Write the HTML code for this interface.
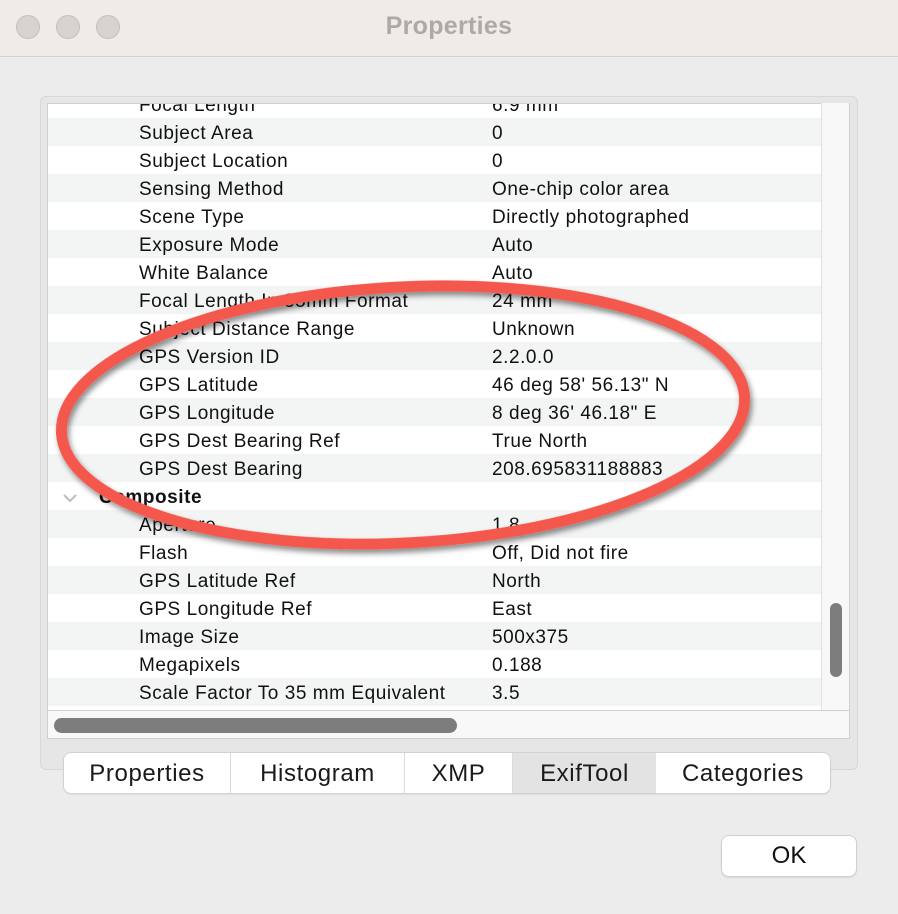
<!DOCTYPE html>
<html><head><style>
*{margin:0;padding:0;box-sizing:border-box}
body{width:898px;height:914px;background:#ececec;font-family:"Liberation Sans",sans-serif;position:relative;overflow:hidden}
.title{position:absolute;left:0;top:0;width:898px;height:57px;background:#efebe6;border-bottom:1px solid #d4d1cd}
.dot{position:absolute;top:15px;width:24px;height:24px;border-radius:50%;background:#d6d3d0;border:1px solid #c4c1be}
.ttl{position:absolute;left:0;width:898px;top:12px;text-align:center;font-weight:bold;font-size:25px;color:#ada9a5;letter-spacing:0.3px}
.box{position:absolute;left:40px;top:96px;width:818px;height:674px;background:#e6e6e6;border:1px solid #d8d8d8;border-radius:6px}
.tbl{position:absolute;left:47px;top:103px;width:774px;height:607px;background:#fff;overflow:hidden;border-left:1px solid #d0d0d0;border-top:1px solid #d0d0d0}
.row{position:absolute;left:0;width:774px;height:28px;font-size:19px;line-height:32px;color:#111;letter-spacing:0.55px}
.row.g{background:#f3f4f4}
.k{position:absolute;left:91px}
.v{position:absolute;left:444px}
.vs{position:absolute;left:821px;top:103px;width:29px;height:607px;background:#f8f8f8;border-left:1px solid #e0e0e0;border-right:1px solid #d0d0d0}
.hs{position:absolute;left:47px;top:710px;width:803px;height:29px;background:#f8f8f8;border:1px solid #d0d0d0}
.tabs{position:absolute;left:64px;top:753px;width:766px;height:40px;background:#fff;border-radius:7px;box-shadow:0 0 0 1px #d2d2d2,0 1px 2px rgba(0,0,0,.15);overflow:hidden}
.tab{position:absolute;top:0;height:40px;line-height:42px;text-align:center;font-size:24px;color:#1a1a1a;border-left:1px solid #dcdcdc;letter-spacing:0.6px}
.ok{position:absolute;left:722px;top:836px;width:134px;height:40px;background:#fff;border-radius:7px;box-shadow:0 0 0 1px #d0d0d0,0 1px 2px rgba(0,0,0,.2);text-align:center;line-height:40px;font-size:24px;color:#111}
</style></head><body>
<div class="title"><div class="dot" style="left:16px"></div><div class="dot" style="left:56px"></div><div class="dot" style="left:96px"></div><div class="ttl">Properties</div></div>
<div class="box"></div>
<div class="tbl">
<div class="row" style="top:-14px"><span class="k">Focal Length</span><span class="v">6.9 mm</span></div>
<div class="row g" style="top:14px"><span class="k">Subject Area</span><span class="v">0</span></div>
<div class="row" style="top:42px"><span class="k">Subject Location</span><span class="v">0</span></div>
<div class="row g" style="top:70px"><span class="k">Sensing Method</span><span class="v">One-chip color area</span></div>
<div class="row" style="top:98px"><span class="k">Scene Type</span><span class="v">Directly photographed</span></div>
<div class="row g" style="top:126px"><span class="k">Exposure Mode</span><span class="v">Auto</span></div>
<div class="row" style="top:154px"><span class="k">White Balance</span><span class="v">Auto</span></div>
<div class="row g" style="top:182px"><span class="k">Focal Length In 35mm Format</span><span class="v">24 mm</span></div>
<div class="row" style="top:210px"><span class="k">Subject Distance Range</span><span class="v">Unknown</span></div>
<div class="row g" style="top:238px"><span class="k">GPS Version ID</span><span class="v">2.2.0.0</span></div>
<div class="row" style="top:266px"><span class="k">GPS Latitude</span><span class="v">46 deg 58' 56.13" N</span></div>
<div class="row g" style="top:294px"><span class="k">GPS Longitude</span><span class="v">8 deg 36' 46.18" E</span></div>
<div class="row" style="top:322px"><span class="k">GPS Dest Bearing Ref</span><span class="v">True North</span></div>
<div class="row g" style="top:350px"><span class="k">GPS Dest Bearing</span><span class="v">208.695831188883</span></div>
<div class="row" style="top:378px"><svg style="position:absolute;left:14px;top:11px" width="16" height="10"><path d="M2 2 L8 8 L14 2" stroke="#bdbdbd" stroke-width="2" fill="none"/></svg><span class="k" style="left:51px;font-weight:bold">Composite</span></div>
<div class="row g" style="top:406px"><span class="k">Aperture</span><span class="v">1.8</span></div>
<div class="row" style="top:434px"><span class="k">Flash</span><span class="v">Off, Did not fire</span></div>
<div class="row g" style="top:462px"><span class="k">GPS Latitude Ref</span><span class="v">North</span></div>
<div class="row" style="top:490px"><span class="k">GPS Longitude Ref</span><span class="v">East</span></div>
<div class="row g" style="top:518px"><span class="k">Image Size</span><span class="v">500x375</span></div>
<div class="row" style="top:546px"><span class="k">Megapixels</span><span class="v">0.188</span></div>
<div class="row g" style="top:574px"><span class="k">Scale Factor To 35 mm Equivalent</span><span class="v">3.5</span></div>
</div>
<div class="vs"><div style="position:absolute;left:8px;top:500px;width:12px;height:74px;border-radius:6px;background:#7d7d7d"></div></div>
<div class="hs"><div style="position:absolute;left:6px;top:7px;width:403px;height:15px;border-radius:8px;background:#7d7d7d"></div></div>
<svg style="position:absolute;left:0;top:0" width="898" height="914">
<defs><filter id="sh" x="-10%" y="-20%" width="120%" height="140%"><feDropShadow dx="2" dy="4" stdDeviation="3" flood-color="#000" flood-opacity="0.45"/></filter></defs>
<ellipse cx="403" cy="415" rx="342" ry="128" transform="rotate(-3 403 415)" fill="none" stroke="#f4584d" stroke-width="11" filter="url(#sh)"/>
</svg>
<div class="tabs">
<div class="tab" style="left:0;width:166px;border-left:none">Properties</div>
<div class="tab" style="left:166px;width:174px">Histogram</div>
<div class="tab" style="left:340px;width:108px">XMP</div>
<div class="tab" style="left:448px;width:144px;background:#e3e3e3">ExifTool</div>
<div class="tab" style="left:592px;width:174px;border-left:none">Categories</div>
</div>
<div class="ok">OK</div>
</body></html>
